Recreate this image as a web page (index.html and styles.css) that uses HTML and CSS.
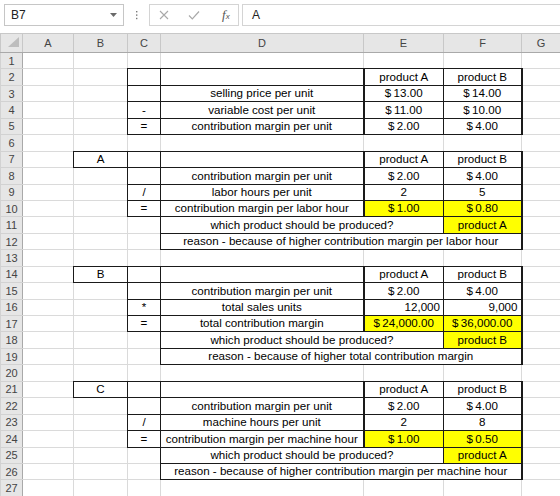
FILE: index.html
```html
<!DOCTYPE html>
<html lang="en">
<head>
    <meta charset="UTF-8">
    <meta name="viewport" content="width=device-width, initial-scale=1.0">
    <title>Product mix - contribution margin</title>
    <link rel="stylesheet" href="styles.css">
</head>
<body>
    <div class="formula-bar">
        <div class="name-box">
            <span>B7</span>
            <svg width="7" height="4" viewBox="0 0 7 4"><polygon points="0,0 7,0 3.5,4" fill="#6a6a6a"/></svg>
        </div>
        <div class="grip">
            <svg width="3" height="10" viewBox="0 0 3 10">
                <rect x="1" y="1" width="1.4" height="1.4" fill="#7a7a7a"/>
                <rect x="1" y="4.4" width="1.4" height="1.4" fill="#7a7a7a"/>
                <rect x="1" y="7.8" width="1.4" height="1.4" fill="#7a7a7a"/>
            </svg>
        </div>
        <div class="fx-buttons">
            <svg class="btn" width="10" height="10" viewBox="0 0 10 10"><path d="M1 1 L9 9 M9 1 L1 9" stroke="#a9a9a9" stroke-width="1.1" fill="none"/></svg>
            <svg class="btn" width="12" height="10" viewBox="0 0 12 10"><path d="M1 5.5 L4.3 8.8 L11 1.5" stroke="#a9a9a9" stroke-width="1.2" fill="none"/></svg>
            <span class="fx"><i>f</i><span class="x">x</span></span>
        </div>
        <div class="formula-input">A</div>
    </div>

    <!-- sheet: row headers in the first column, gridlines come from td borders -->
    <table class="sheet">
        <colgroup>
            <col class="w-head"><col class="w-a"><col class="w-b"><col class="w-c"><col class="w-d"><col class="w-e"><col class="w-f"><col class="w-g">
        </colgroup>
        <tr class="col-heads">
            <th class="corner"><svg width="11" height="10" viewBox="0 0 11 10"><polygon points="11,0 11,10 0,10" fill="#bdbdbd"/></svg></th>
            <th>A</th><th>B</th><th>C</th><th>D</th><th>E</th><th>F</th><th>G</th>
        </tr>
        <tr><th>1</th><td></td><td></td><td></td><td></td><td></td><td></td><td></td></tr>
        <tr><th>2</th><td></td><td></td><td class="bx"></td><td class="bx"></td><td class="bx sep">product A</td><td class="bx edge">product B</td><td></td></tr>
        <tr><th>3</th><td></td><td></td><td class="bx"></td><td class="bx">selling price per unit</td><td class="bx sep">$&#8201;13.00</td><td class="bx edge">$&#8201;14.00</td><td></td></tr>
        <tr><th>4</th><td></td><td></td><td class="bx">-</td><td class="bx">variable cost per unit</td><td class="bx sep">$&#8201;11.00</td><td class="bx edge">$&#8201;10.00</td><td></td></tr>
        <tr><th>5</th><td></td><td></td><td class="bx">=</td><td class="bx">contribution margin per unit</td><td class="bx sep">$&#8201;2.00</td><td class="bx edge">$&#8201;4.00</td><td></td></tr>
        <tr><th>6</th><td></td><td></td><td></td><td></td><td></td><td></td><td></td></tr>

        <tr><th>7</th><td></td><td class="bx">A</td><td class="bx"></td><td class="bx"></td><td class="bx sep">product A</td><td class="bx edge">product B</td><td></td></tr>
        <tr><th>8</th><td></td><td></td><td class="bx"></td><td class="bx">contribution margin per unit</td><td class="bx sep">$&#8201;2.00</td><td class="bx edge">$&#8201;4.00</td><td></td></tr>
        <tr><th>9</th><td></td><td></td><td class="bx">/</td><td class="bx">labor hours per unit</td><td class="bx sep">2</td><td class="bx edge">5</td><td></td></tr>
        <tr><th>10</th><td></td><td></td><td class="bx">=</td><td class="bx">contribution margin per labor hour</td><td class="bx sep yl">$&#8201;1.00</td><td class="bx edge yl">$&#8201;0.80</td><td></td></tr>
        <tr><th>11</th><td></td><td></td><td></td><td class="bx" colspan="2">which product should be produced?</td><td class="bx edge yl">product A</td><td></td></tr>
        <tr><th>12</th><td></td><td></td><td></td><td class="bx edge" colspan="3">reason - because of higher contribution margin per labor hour</td><td></td></tr>
        <tr><th>13</th><td></td><td></td><td></td><td></td><td></td><td></td><td></td></tr>

        <tr><th>14</th><td></td><td class="bx">B</td><td class="bx"></td><td class="bx"></td><td class="bx sep">product A</td><td class="bx edge">product B</td><td></td></tr>
        <tr><th>15</th><td></td><td></td><td class="bx"></td><td class="bx">contribution margin per unit</td><td class="bx sep">$&#8201;2.00</td><td class="bx edge">$&#8201;4.00</td><td></td></tr>
        <tr><th>16</th><td></td><td></td><td class="bx">*</td><td class="bx">total sales units</td><td class="bx sep num">12,000</td><td class="bx edge num">9,000</td><td></td></tr>
        <tr><th>17</th><td></td><td></td><td class="bx">=</td><td class="bx">total contribution margin</td><td class="bx sep yl">$&#8201;24,000.00</td><td class="bx edge yl">$&#8201;36,000.00</td><td></td></tr>
        <tr><th>18</th><td></td><td></td><td></td><td class="bx" colspan="2">which product should be produced?</td><td class="bx edge yl">product B</td><td></td></tr>
        <tr><th>19</th><td></td><td></td><td></td><td class="bx edge" colspan="3">reason - because of higher total contribution margin</td><td></td></tr>
        <tr><th>20</th><td></td><td></td><td></td><td></td><td></td><td></td><td></td></tr>

        <tr><th>21</th><td></td><td class="bx">C</td><td class="bx"></td><td class="bx"></td><td class="bx sep">product A</td><td class="bx edge">product B</td><td></td></tr>
        <tr><th>22</th><td></td><td></td><td class="bx"></td><td class="bx">contribution margin per unit</td><td class="bx sep">$&#8201;2.00</td><td class="bx edge">$&#8201;4.00</td><td></td></tr>
        <tr><th>23</th><td></td><td></td><td class="bx">/</td><td class="bx">machine hours per unit</td><td class="bx sep">2</td><td class="bx edge">8</td><td></td></tr>
        <tr><th>24</th><td></td><td></td><td class="bx">=</td><td class="bx">contribution margin per machine hour</td><td class="bx sep yl">$&#8201;1.00</td><td class="bx edge yl">$&#8201;0.50</td><td></td></tr>
        <tr><th>25</th><td></td><td></td><td></td><td class="bx" colspan="2">which product should be produced?</td><td class="bx edge yl">product A</td><td></td></tr>
        <tr><th>26</th><td></td><td></td><td></td><td class="bx edge" colspan="3">reason - because of higher contribution margin per machine hour</td><td></td></tr>
        <tr><th>27</th><td></td><td></td><td></td><td></td><td></td><td></td><td></td></tr>
    </table>
</body>
</html>
```

FILE: styles.css
```css
body {
    margin: 0;
    width: 560px;
    height: 496px;
    overflow: hidden;
    background: #fff;
    font-family: "Liberation Sans", Arial, sans-serif;
}

/* formula bar */
.formula-bar {
    height: 33px;
    box-sizing: border-box;
    padding-top: 4px;
    display: flex;
    align-items: flex-start;
    white-space: nowrap;
}
.name-box {
    margin-left: 4px;
    width: 120px;
    height: 22px;
    box-sizing: border-box;
    border: 1px solid #c6c6c6;
    display: flex;
    align-items: center;
    justify-content: space-between;
    padding: 0 6px 0 6px;
    font-size: 12px;
    color: #222;
}
.grip {
    width: 25px;
    height: 22px;
    display: flex;
    align-items: center;
    justify-content: center;
}
.fx-buttons {
    width: 90px;
    height: 22px;
    box-sizing: border-box;
    border: 1px solid #d4d4d4;
    display: flex;
    align-items: center;
    padding-left: 9px;
    gap: 19px;
}
.fx {
    font-family: "Liberation Serif", serif;
    color: #555;
    font-size: 13px;
    margin-left: 3px;
}
.fx .x {
    font-family: "Liberation Sans", sans-serif;
    font-size: 8px;
    font-style: italic;
}
.formula-input {
    flex: 1;
    margin-left: 3px;
    height: 22px;
    box-sizing: border-box;
    border: 1px solid #d4d4d4;
    border-right: none;
    padding-left: 9px;
    font-size: 12px;
    line-height: 20px;
    color: #222;
}

/* sheet */
.sheet {
    width: 560px;
    table-layout: fixed;
    border-collapse: collapse;
    font-size: 11.6px;
    color: #000;
}
.w-head { width: 22px; }
.w-a { width: 51px; }
.w-b { width: 54px; }
.w-c { width: 33px; }
.w-d { width: 203px; }
.w-e { width: 80px; }
.w-f { width: 78px; }
.w-g { width: 39px; }

.sheet tr {
    height: 16.45px;
}
.sheet th,
.sheet td {
    padding: 0 2px;
    line-height: 14px;
    white-space: nowrap;
    overflow: hidden;
}
.sheet td {
    border: 1px solid #dadada;
    text-align: center;
    vertical-align: bottom;
    padding-bottom: 1px;
}
.sheet th {
    background: #e6e6e6;
    color: #444;
    font-weight: normal;
    font-size: 11px;
    text-align: center;
    border: 1px solid #d2d2d2;
    border-right-color: #a9a9a9;
}
.sheet .col-heads th {
    border-color: #c8c8c8;
    border-bottom-color: #a9a9a9;
    height: 16px;
    vertical-align: middle;
}
.sheet .corner {
    text-align: right;
    vertical-align: bottom;
    padding: 0 3px 2px 0;
    line-height: 0;
}

/* cell borders: "double" outranks the solid gridlines in the collapsed
   border model, and at 1-2px it is drawn as a plain line */
.sheet td.bx {
    border: 1px double #1a1a1a;
}
.sheet td.sep {
    border-left: 2px double #1a1a1a;
}
.sheet td.edge {
    border-right: 2px double #1a1a1a;
}
.sheet td.yl {
    background: #ffff00;
}
.sheet td.num {
    text-align: right;
    padding-right: 3px;
}
```
